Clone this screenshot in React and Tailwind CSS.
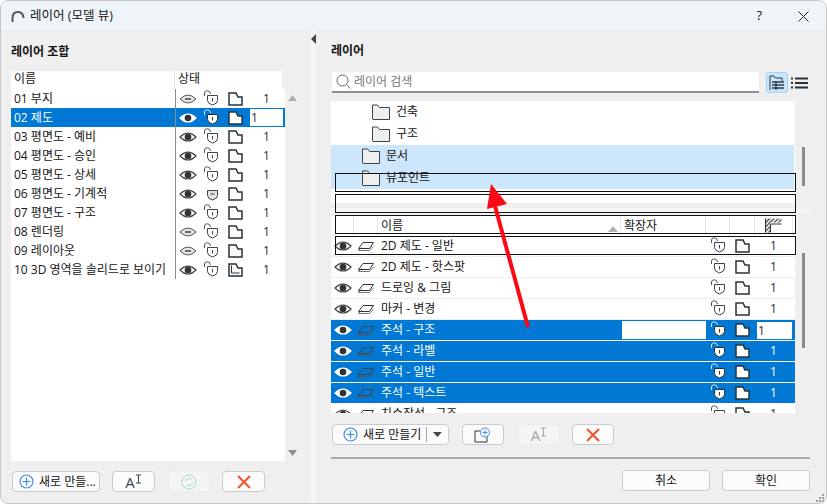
import React from "react";

const COMBOS = [
  { name: "01 부지", eye: "half", lock: "open", folder: "a" },
  { name: "02 제도", eye: "open", lock: "open", folder: "a", selected: true },
  { name: "03 평면도 - 예비", eye: "open", lock: "open", folder: "a" },
  { name: "04 평면도 - 승인", eye: "open", lock: "open", folder: "a" },
  { name: "05 평면도 - 상세", eye: "open", lock: "open", folder: "a" },
  { name: "06 평면도 - 기계적", eye: "open", lock: "shut", folder: "a" },
  { name: "07 평면도 - 구조", eye: "open", lock: "open", folder: "a" },
  { name: "08 렌더링", eye: "half", lock: "open", folder: "a" },
  { name: "09 레이아웃", eye: "half", lock: "open", folder: "a" },
  { name: "10 3D 영역을 솔리드로 보이기", eye: "open", lock: "open", folder: "b" },
];

const LAYERS = [
  { name: "2D 제도 - 일반" },
  { name: "2D 제도 - 핫스팟" },
  { name: "드로잉 & 그림" },
  { name: "마커 - 변경" },
  { name: "주석 - 구조", selected: true, editing: true },
  { name: "주석 - 라벨", selected: true },
  { name: "주석 - 일반", selected: true },
  { name: "주석 - 텍스트", selected: true },
  { name: "치수작성 - 구조" },
];

function Eye({ kind, inverted }) {
  if (kind === "half") {
    return (
      <svg width="18" height="12" viewBox="0 0 18 12">
        <path d="M1 6Q9 -2 17 6Q9 14 1 6Z" fill="#e4e4e4" stroke="#555" />
        <path d="M6 6H12" stroke="#444" strokeWidth="1.4" />
      </svg>
    );
  }
  return (
    <svg width="18" height="12" viewBox="0 0 18 12">
      <path d="M1 6Q9 -2 17 6Q9 14 1 6Z" fill={inverted ? "#fff" : "#f6f6f6"} stroke={inverted ? "#fff" : "#444"} strokeWidth="1.2" />
      <circle cx="9" cy="6" r="3.3" fill="#333" />
    </svg>
  );
}

function Lock({ kind, inverted }) {
  const line = inverted ? "#27323d" : "#3c4650";
  return (
    <svg width="16" height="16" viewBox="0 0 16 16" className="-mt-[2px]">
      {kind === "open" && <path d="M1.5 6V3Q1.5 0.8 4.5 0.8Q7 0.8 7.5 4" fill="none" stroke={inverted ? "#d5e3f0" : "#4a5159"} />}
      <path d="M4.5 5.5H14.5V10.5Q14.5 13.5 9.5 15Q4.5 13.5 4.5 10.5Z" fill={inverted ? "#fff" : kind === "shut" ? "#e2e2e2" : "#fff"} stroke={line} />
      {kind === "open" ? <path d="M9.5 8V11.5" stroke={line} /> : <path d="M7.5 9H11.5" stroke={line} />}
    </svg>
  );
}

function Sheet({ kind, inverted }) {
  return (
    <svg width="16" height="14" viewBox="0 0 16 14">
      <path d="M1 1H8L10 5H14V13H1Z" fill={inverted ? "#fff" : "#fbfbfb"} stroke="#27323d" strokeWidth="1.5" />
      {kind === "b" && <path d="M3.5 2.5V10H11.5" fill="none" stroke="#27323d" />}
    </svg>
  );
}

function Plane({ inverted }) {
  return (
    <svg width="18" height="12" viewBox="0 0 18 12">
      <path d="M1 10.5L5 7.5" stroke={inverted ? "#555" : "#777"} />
      <path d="M1.5 10.5H12.5L16.5 6" fill="none" stroke={inverted ? "#555" : "#777"} />
      <path d="M1.5 8.5L6 2.5H16.5L12.5 8.5Z" fill="none" stroke={inverted ? "#3b4651" : "#333"} />
    </svg>
  );
}

function Folder() {
  return (
    <svg width="18" height="16" viewBox="0 0 18 16">
      <path d="M0.5 15V1H5.5L7.5 3.5H17.5V15.5H1Z" fill="#efefef" stroke="#3a444e" />
    </svg>
  );
}

function Plus() {
  return (
    <svg width="15" height="15" viewBox="0 0 15 15">
      <circle cx="7.5" cy="7.5" r="6.5" fill="none" stroke="#3d8bee" strokeWidth="1.2" />
      <path d="M7.5 3.5V11.5M3.5 7.5H11.5" stroke="#3d8bee" strokeWidth="1.2" />
    </svg>
  );
}

function RedX() {
  return (
    <svg width="14" height="14" viewBox="0 0 14 14">
      <path d="M1 1L13 13M13 1L1 13" stroke="#f4502a" strokeWidth="2" />
    </svg>
  );
}

function Rename({ muted }) {
  return (
    <span className={`flex items-end ${muted ? "text-[#a6a6a6]" : "text-[#3d4650]"}`}>
      <span className="text-[15px] leading-[15px]">A</span>
      <svg width="7" height="10" viewBox="0 0 7 10" className="mb-[6px]">
        <path d="M1 1H6M1 9H6M3.5 1V9" stroke="currentColor" />
      </svg>
    </span>
  );
}

function Btn({ className, children, disabled }) {
  return (
    <button className={`h-[21px] shrink-0 rounded-[4px] border flex items-center justify-center ${disabled ? "border-[#ececec] bg-[#f5f5f5]" : "border-[#cbcbcb] bg-[#fbfbfb]"} ${className}`}>
      {children}
    </button>
  );
}

export default function App() {
  return (
    <div className="relative w-[827px] h-[504px] flex flex-col overflow-hidden rounded-[8px] border border-[#c8c8c8] bg-[#efefef] text-[12px] text-[#141414] font-['Open_Sans','Noto_Sans_CJK_KR',sans-serif]">
      {/* title bar */}
      <div className="h-[30px] shrink-0 flex items-center bg-[#eff4f9] pl-[10px]">
        <svg width="14" height="13" viewBox="0 0 14 13">
          <path d="M1.5 12V8Q1.5 2 7 2Q12 2 12.5 8" fill="none" stroke="#555" strokeWidth="2" />
        </svg>
        <span className="ml-[5px] text-[12.5px]">레이어 (모델 뷰)</span>
        <span className="ml-auto mr-[36px] text-[13px] font-medium">?</span>
        <svg width="11" height="11" viewBox="0 0 11 11" className="mr-[17px]">
          <path d="M0.5 0.5L10.5 10.5M10.5 0.5L0.5 10.5" stroke="#222" />
        </svg>
      </div>

      <div className="flex-1 flex min-h-0">
        {/* left panel */}
        <div className="w-[310px] shrink-0 pl-[10px] flex flex-col">
          <div className="h-[40px] flex items-center pt-[2px] font-bold">레이어 조합</div>
          <div className="flex h-[390px]">
            <div className="w-[274px] flex flex-col">
              <div className="h-[18px] w-[272px] flex bg-white leading-[15px] border-r border-[#eeeeee]">
                <div className="w-[164px] pl-[3px] border-r border-[#e6e6e6]">이름</div>
                <div className="pl-[3px]">상태</div>
              </div>
              <div className="flex-1 bg-white">
                {COMBOS.map((c) => (
                  <div key={c.name} className={`h-[19px] flex items-center ${c.selected ? "bg-[#0078d4] text-white" : ""}`}>
                    <div className="w-[165px] h-full pl-[3px] flex items-center whitespace-nowrap border-r border-[#8c8c8c]">{c.name}</div>
                    <div className="w-[24px] flex justify-center"><Eye kind={c.eye} inverted={c.selected} /></div>
                    <div className="w-[22px] flex justify-center"><Lock kind={c.lock} inverted={c.selected} /></div>
                    <div className="w-[27px] flex justify-center"><Sheet kind={c.folder} inverted={c.selected} /></div>
                    {c.selected ? (
                      <div className="w-[35px] h-[19px] bg-white border border-[#0078d4] text-[#2a2a4a] pl-[1px] leading-[17px]">1</div>
                    ) : (
                      <div className="w-[35px] pl-[14px] text-[#2a2a4a]">1</div>
                    )}
                  </div>
                ))}
              </div>
            </div>
            <div className="flex-1 flex flex-col items-start pl-[3px] pt-[24px] pb-[5px] justify-between">
              <svg width="9" height="6" viewBox="0 0 9 6"><path d="M4.5 0L9 6H0Z" fill="#b0b0b0" /></svg>
              <svg width="9" height="6" viewBox="0 0 9 6"><path d="M0 0H9L4.5 6Z" fill="#8e8e8e" /></svg>
            </div>
          </div>
          <div className="flex mt-[10px] pl-[1px]">
            <Btn className="w-[88px] gap-[5px] justify-start! pl-[6px]"><Plus /><span className="whitespace-nowrap">새로 만들...</span></Btn>
            <Btn className="w-[43px] ml-[12px]"><Rename /></Btn>
            <Btn disabled className="w-[42px] ml-[13px]">
              <svg width="16" height="16" viewBox="0 0 16 16">
                <circle cx="8" cy="8" r="7" fill="none" stroke="#a5dcb8" />
                <path d="M4.5 7Q5.5 4 8.5 4.2L10.5 5.5M11.5 9Q10.5 12 7.5 11.8L5.5 10.5" fill="none" stroke="#a5dcb8" />
              </svg>
            </Btn>
            <Btn className="w-[43px] ml-[12px]"><RedX /></Btn>
          </div>
        </div>

        {/* splitter */}
        <div className="w-[5px] shrink-0 bg-[#f6f6f6] pt-[2px]">
          <svg width="5" height="10" viewBox="0 0 5 10" className="mt-[1px]"><path d="M5 0V10L0 5Z" fill="#444" /></svg>
        </div>

        {/* right panel */}
        <div className="flex-1 pl-[15px] flex flex-col">
          <div className="h-[40px] flex items-center font-bold">레이어</div>
          <div className="flex items-start mt-[1px] pl-[1px]">
            <div className="w-[427px] h-[21px] bg-white border-b-2 border-[#8f8f8f] flex items-center pl-[4px] text-[#777777]">
              <svg width="15" height="15" viewBox="0 0 15 15">
                <circle cx="6.5" cy="6.5" r="5.5" fill="none" stroke="#666" />
                <path d="M10.5 10.5L14.5 14.5" stroke="#666" />
              </svg>
              <span className="ml-[3px]">레이어 검색</span>
            </div>
            <div className="ml-[7px] w-[22px] h-[21px] rounded-[3px] border border-[#a5d3f5] bg-[#cce4f7] flex items-center justify-center">
              <svg width="16" height="16" viewBox="0 0 16 16">
                <path d="M1 15V1H5L6.5 3H13V6" fill="none" stroke="#2b3a48" />
                <path d="M3 7H15M3 10H15M3 13H15M7 7V15" stroke="#2b3a48" strokeWidth="1.3" fill="none" />
              </svg>
            </div>
            <svg width="17" height="12" viewBox="0 0 17 12" className="ml-[3px] mt-[5px]">
              <path d="M0 1.5H2M4 1.5H17M0 6H2M4 6H17M0 10.5H2M4 10.5H17" stroke="#27323d" strokeWidth="2" />
            </svg>
          </div>

          <div className="flex mt-[8px]">
            <div className="w-[464px] h-[102px] bg-white">
              <div className="h-[22px] flex items-center pl-[41px] gap-[6px] pb-[1px]"><Folder /><span>건축</span></div>
              <div className="h-[22px] flex items-center pl-[41px] gap-[6px] pb-[1px]"><Folder /><span>구조</span></div>
              <div className="h-[22px] w-[463px] flex items-center pl-[31px] gap-[6px] pb-[1px] bg-[#cce6fb]"><Folder /><span>문서</span></div>
              <div className="h-[22px] w-[463px] flex items-center pl-[31px] gap-[6px] pb-[1px] bg-[#cce6fb]"><Folder /><span>뷰포인트</span></div>
            </div>
            <div className="ml-[7px] mt-[46px] w-[3px] h-[39px] bg-[#8c8c8c]" />
          </div>

          <div className="h-[5px] mt-[5px] w-[480px] bg-[#f5f5f5]" />
          <div className="h-[3px]" />

          <div className="flex">
            <div className="w-[464px] h-[197px] bg-white overflow-hidden">
              <div className="h-[20px] grid grid-cols-[23px_24px_243px_85px_24px_25px_38px] leading-[19px]">
                <div className="border-r border-[#e8e8e8]" />
                <div className="border-r border-[#e8e8e8]" />
                <div className="border-r border-[#e8e8e8] pl-[3px] flex justify-between">
                  <span>이름</span>
                  <svg width="10" height="6" viewBox="0 0 10 6" className="mt-[10px] mr-[2px]"><path d="M5 0L10 6H0Z" fill="#b0b0b0" /></svg>
                </div>
                <div className="border-r border-[#e8e8e8] pl-[3px]">확장자</div>
                <div className="border-r border-[#e8e8e8]" />
                <div className="border-r border-[#e8e8e8]" />
                <div className="border-r border-[#e8e8e8] flex justify-center pt-[2px]">
                  <svg width="17" height="15" viewBox="0 0 17 15">
                    <defs>
                      <pattern id="hatch" width="3" height="3" patternUnits="userSpaceOnUse" patternTransform="rotate(45)">
                        <rect width="3" height="3" fill="#fff" />
                        <rect width="1.4" height="3" fill="#444" />
                      </pattern>
                    </defs>
                    <path d="M0.5 14.5V0.5H16.5V4.5H5V14.5Z" fill="url(#hatch)" />
                    <path d="M0.5 14.5V0.5M16.5 6H5.5V14.5" fill="none" stroke="#333" />
                  </svg>
                </div>
              </div>
              {LAYERS.map((l) => (
                <div key={l.name} className={`h-[21px] grid grid-cols-[23px_24px_243px_85px_24px_25px_38px] items-center border-b ${l.selected ? "bg-[#0078d4] text-white border-white" : "border-[#eeeeee]"}`}>
                  <div className="flex justify-center pl-[1px]"><Eye kind="open" inverted={l.selected} /></div>
                  <div className="flex justify-center"><Plane inverted={l.selected} /></div>
                  <div className="pl-[3px] whitespace-nowrap pb-[1px]">{l.name}</div>
                  <div className="h-full py-px">{l.editing && <div className="h-[18px] bg-white ml-px" />}</div>
                  <div className="flex justify-center"><Lock kind="open" inverted={l.selected} /></div>
                  <div className="flex justify-center"><Sheet kind="a" inverted={l.selected} /></div>
                  {l.editing ? (
                    <div className="h-[19px] ml-px bg-white border border-[#0078d4] text-[#2a2a4a] pl-[1px] leading-[17px]">1</div>
                  ) : (
                    <div className={`pl-[15px] ${l.selected ? "text-white" : "text-[#2a2a4a]"}`}>1</div>
                  )}
                </div>
              ))}
            </div>
            <div className="ml-[7px] mt-[37px] w-[3px] h-[95px] bg-[#8c8c8c]" />
          </div>

          <div className="flex mt-[11px] pl-[1px]">
            <Btn className="w-[117px]">
              <span className="flex items-center gap-[5px] w-[96px] pl-[10px] border-r border-[#a8a8a8] h-[15px]"><Plus /><span className="whitespace-nowrap">새로 만들기</span></span>
              <svg width="9" height="5" viewBox="0 0 9 5" className="mx-[6px]"><path d="M0 0H9L4.5 5Z" fill="#444" /></svg>
            </Btn>
            <Btn className="w-[42px] ml-[13px]">
              <svg width="18" height="16" viewBox="0 0 18 16">
                <path d="M1 4V15H13V9" fill="none" stroke="#27323d" />
                <path d="M1 4H6" stroke="#27323d" />
                <circle cx="11" cy="5.5" r="4.5" fill="#fff" stroke="#3d8bee" />
                <path d="M11 3V8M8.5 5.5H13.5" stroke="#3d8bee" />
              </svg>
            </Btn>
            <Btn disabled className="w-[42px] ml-[14px]"><Rename muted /></Btn>
            <Btn className="w-[42px] ml-[12px]"><RedX /></Btn>
          </div>

          <div className="w-[479px] h-[2px] mt-[12px] bg-[#ababab]" />
          <div className="flex mt-[11px] pl-[291px]">
            <Btn className="w-[88px]">취소</Btn>
            <Btn className="w-[88px] ml-[12px] border-[#0067c0]">확인</Btn>
          </div>
        </div>
      </div>

      {/* outlines and arrow drawn on top of the dialog */}
      <div className="absolute left-[334px] top-[172px] w-[461px] h-[19px] border border-[#111]" />
      <div className="absolute left-[334px] top-[193px] w-[461px] h-[19px] border border-[#111]" />
      <div className="absolute left-[334px] top-[214px] w-[461px] h-[19px] border border-[#111]" />
      <div className="absolute left-[334px] top-[235px] w-[461px] h-[19px] border border-[#111]" />
      <svg width="60" height="160" viewBox="0 0 60 160" className="absolute left-[479px] top-[175px]">
        <path d="M48 151L15 30" stroke="#fa0a14" strokeWidth="4" />
        <path d="M11 8L27 28L7 33Z" fill="#fa0a14" />
      </svg>
      <svg width="9" height="9" viewBox="0 0 9 9" className="absolute right-[1px] bottom-[1px]">
        <path d="M6 1H8V3H6ZM3 4H5V6H3ZM6 4H8V6H6ZM0 7H2V9H0ZM3 7H5V9H3ZM6 7H8V9H6Z" fill="#9a9a9a" />
      </svg>
    </div>
  );
}
